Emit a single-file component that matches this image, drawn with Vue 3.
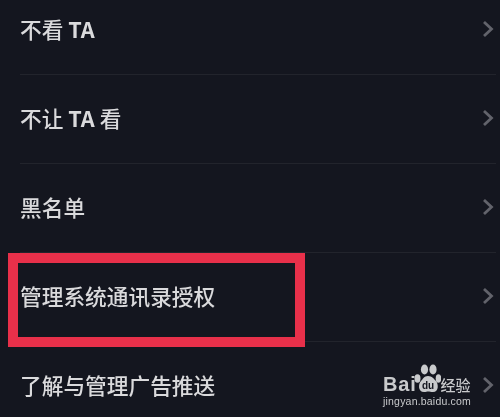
<script setup>
const rows = [
  { parts: [{ t: '不看 ' }, { t: 'TA', latin: true }] },
  { parts: [{ t: '不让 ' }, { t: 'TA', latin: true }, { t: ' 看' }] },
  { parts: [{ t: '黑名单' }] },
  { parts: [{ t: '管理系统通讯录授权' }] },
  { parts: [{ t: '了解与管理广告推送' }] }
]
</script>

<template>
  <div class="screen">
    <ul class="list">
      <li v-for="(row, i) in rows" :key="i" class="row">
        <span class="label">
          <span v-for="p in row.parts" :key="p.t" :class="{ latin: p.latin }">{{ p.t }}</span>
        </span>
        <svg class="chevron" width="12" height="18" viewBox="0 0 12 18">
          <path d="M2 2 L9.500 9 L2 16" fill="none" stroke="#62636b" stroke-width="2.800" />
        </svg>
      </li>
    </ul>

    <div class="highlight"></div>

    <div class="mark">
      <div class="mark-top">
        <span class="bai">Bai</span>
        <svg class="paw" width="27" height="31" viewBox="0 0 27 31">
          <ellipse cx="3.500" cy="15.500" rx="3" ry="4.200" fill="#c9cacc" />
          <ellipse cx="10.500" cy="6.500" rx="3.600" ry="5" fill="#c9cacc" />
          <ellipse cx="19" cy="6.500" rx="3.600" ry="5" fill="#c9cacc" />
          <ellipse cx="24.500" cy="15.500" rx="2.800" ry="4.200" fill="#c9cacc" />
          <path d="M14 13 C10 13 9 16 7 18 C4 21 4 29 10 29 C12 29 13 28.500 14 28.500 C15.500 28.500 17 29 19 29 C25 29 24.500 21 22 18 C20 16 18 13 14 13 Z" fill="#c9cacc" />
          <text x="14" y="26" text-anchor="middle" class="du">du</text>
        </svg>
        <span class="jy">经验</span>
      </div>
      <div class="url">jingyan.baidu.com</div>
    </div>
  </div>
</template>

<style scoped>
.screen {
  position: relative;
  width: 500px;
  height: 417px;
  overflow: hidden;
  background: #14161f;
  font-family: "Noto Sans CJK SC", "Liberation Sans", sans-serif;
}
.list {
  list-style: none;
  margin: -14px 4px 0 20px;
  padding: 0;
}
.row {
  display: flex;
  align-items: center;
  justify-content: space-between;
  box-sizing: border-box;
  height: 89px;
  padding: 0 2px 2px 0;
  border-bottom: 1px solid #22242c;
}
.label {
  color: #dadadc;
  font-size: 21.700px;
  font-weight: 500;
  line-height: 30px;
  filter: blur(0.5px);
}
.latin {
  font-weight: 700;
}
.chevron {
  flex: none;
  filter: blur(0.6px);
}
.highlight {
  position: absolute;
  left: 8px;
  top: 253px;
  width: 297px;
  height: 94px;
  box-sizing: border-box;
  border: 10.500px solid #e8304a;
}
.mark {
  position: absolute;
  left: 383px;
  top: 362px;
  width: 92px;
  color: #c9cacc;
  filter: blur(0.4px);
}
.mark-top {
  display: flex;
  align-items: flex-end;
  height: 32px;
}
.bai {
  font-family: "Liberation Sans", sans-serif;
  font-weight: 700;
  font-size: 20px;
  line-height: 20px;
  letter-spacing: 0.800px;
}
.paw {
  flex: none;
  margin: 0 0 0 -3px;
}
.du {
  font-family: "Liberation Sans", sans-serif;
  font-weight: 700;
  font-size: 10px;
  fill: #14161f;
}
.jy {
  font-size: 15px;
  line-height: 19px;
  font-weight: 500;
  white-space: nowrap;
}
.url {
  font-family: "Liberation Sans", sans-serif;
  font-size: 10.500px;
  line-height: 14px;
  letter-spacing: 0.200px;
  white-space: nowrap;
}
</style>
